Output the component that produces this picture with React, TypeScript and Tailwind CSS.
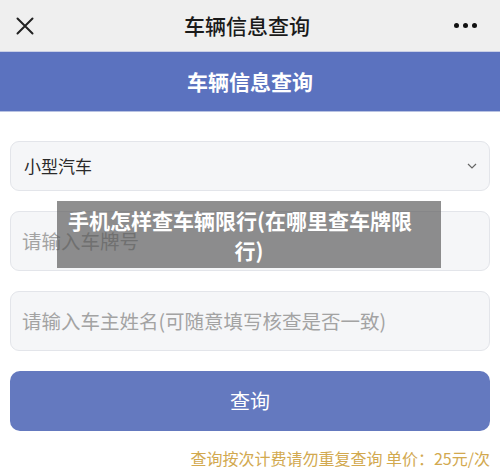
import React from "react";

export default function App() {
  const font = { fontFamily: '"Noto Sans CJK SC", "Noto Sans", sans-serif' };
  return (
    <div className="relative w-[500px] h-[469px] overflow-hidden bg-white" style={font}>
      <div className="h-[52px] bg-[#efefef] border-b border-[#c9cfe6] flex items-center justify-between px-[16px]">
        <svg width="18" height="18" viewBox="0 0 18 18">
          <path d="M1.5 1.5 L16.5 16.5 M16.5 1.5 L1.5 16.5" stroke="#222" strokeWidth="2" strokeLinecap="round" />
        </svg>
        <div className="text-[21px] text-[#1a1a1a] leading-none font-medium ml-[6px]">车辆信息查询</div>
        <div className="flex gap-[4px] mr-[7px]">
          <span className="w-[5px] h-[5px] rounded-full bg-[#111]" />
          <span className="w-[5px] h-[5px] rounded-full bg-[#111]" />
          <span className="w-[5px] h-[5px] rounded-full bg-[#111]" />
        </div>
      </div>
      <div className="h-[60px] bg-[#5b72bf] border-b border-[#b8c2e2] flex items-center justify-center">
        <div className="text-[21px] text-white font-bold leading-none">车辆信息查询</div>
      </div>
      <div className="px-[10px] pt-[29px] flex flex-col">
        <div className="h-[50px] rounded-[9px] bg-[#f5f6f8] border border-[#e3e5ea] flex items-center justify-between pl-[13px] pr-[12px]">
          <span className="text-[17px] text-[#2a2a2a]">小型汽车</span>
          <svg width="10" height="6" viewBox="0 0 10 6">
            <path d="M1 1 L5 5 L9 1" stroke="#666" strokeWidth="1.2" fill="none" />
          </svg>
        </div>
        <div className="mt-[20px] h-[60px] rounded-[9px] bg-[#f5f6f8] border border-[#e3e5ea] flex items-center pl-[11px]">
          <span className="text-[19.5px] text-[#a3a3a3]">请输入车牌号</span>
        </div>
        <div className="mt-[20px] h-[60px] rounded-[9px] bg-[#f5f6f8] border border-[#e3e5ea] flex items-center pl-[11px]">
          <span className="text-[19.5px] text-[#a3a3a3]">请输入车主姓名(可随意填写核查是否一致)</span>
        </div>
        <div className="mt-[20px] h-[60px] rounded-[10px] bg-[#6479bf] flex items-center justify-center">
          <span className="text-[20px] text-white">查询</span>
        </div>
        <div className="mt-[19px] text-right text-[16px] text-[#d2a94f] leading-none">
          查询按次计费请勿重复查询 单价：25元/次
        </div>
      </div>
      <div className="absolute left-[57px] top-[201px] w-[384px] h-[67px] bg-[rgba(85,85,85,0.66)] flex flex-col items-center justify-center text-white font-bold text-[21px] leading-[30px] whitespace-nowrap">
        <div className="mr-[18px]">手机怎样查车辆限行(在哪里查车牌限</div>
        <div>行)</div>
      </div>
    </div>
  );
}
